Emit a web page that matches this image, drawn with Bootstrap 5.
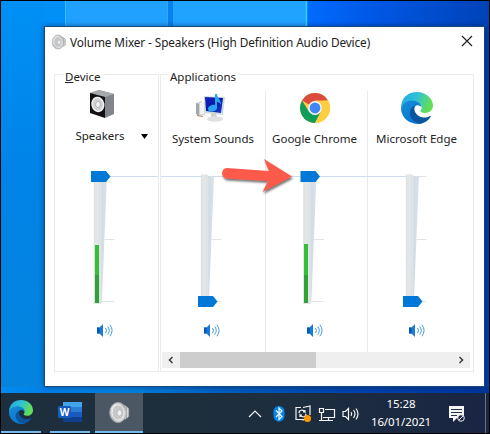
<!DOCTYPE html>
<html lang="en">
<head>
<meta charset="utf-8">
<meta name="viewport" content="width=device-width, initial-scale=1">
<title>Volume Mixer</title>
<link href="https://cdn.jsdelivr.net/npm/bootstrap@5.3.0/dist/css/bootstrap.min.css" rel="stylesheet">
<style>
body{font-family:"Noto Sans","Open Sans",sans-serif;font-size:11.5px;line-height:16px;color:#222;background:#000}
svg{display:block;flex:none}
.screen{width:490px;height:434px;border:1px solid #000}
.desktop{height:392px;background:linear-gradient(90deg,#008cf0 0,#0080e8 44px,#0080df 130px,#005cc0 230px,#0045ad 340px,#00369c 488px)}
.wallpaper{height:392px;width:488px}
.mixer{left:43px;top:25px;width:441px;height:361px;border:1px solid #174a78;box-shadow:0 0 5px rgba(0,20,60,.5)}
.titlebar{height:29px;padding:0 11px 0 6px}
.title-text{font-size:11.8px;letter-spacing:-.1px;white-space:nowrap;margin-left:3px}
.close-glyph{margin-top:-2px}
.panels{padding:18px 0 0 9px;gap:1px}
.panel{height:298px;border:1px solid #ebebeb}
.device{width:105px}.apps{width:314px}
.caption{height:16px;margin:-8px 0 0 8px;padding:0 2px;background:#fff;line-height:19px;width:max-content}
.apps .caption{margin-left:7px}
.app-icon{height:36px}
.device .app-icon{margin:-1px 0 0 -10px}
.device .channel-name{margin:9px 0 0 10px}
.channel-name{height:18px;white-space:nowrap}
.channel .channel-name{padding-top:5px}
.channel{width:104px;height:261px;margin-top:8px}
.channel + .channel{width:102px;border-left:1px solid #e8ebf0}
.channel .app-icon{margin-top:-1px}
.faders{margin-top:-205px}
.device-fader{margin-top:2px}
.scroller{height:16px;background:#efefef;width:308px;margin-left:1px}
.scroller svg{width:18px;height:16px}
.scroll-thumb{width:136px;background:#cdcdcd;height:16px}
.pointer-arrow{left:173px;top:128px;z-index:3}
.taskbar{height:40px;background:linear-gradient(90deg,#1d2e3c,#1d2e3e 60%,#192543);color:#fff}
.task{height:40px;border-bottom:2px solid #76b9ed}
.task-a{width:40px;margin-right:9px}.task-b{width:40px;margin-right:5px}.task-c{width:48px;background:#4b5864}
.tray{margin-left:104px}
.clock{width:62px;line-height:18px;letter-spacing:-.1px;margin-left:5px;white-space:nowrap}
.notes{margin-left:15px}
.show-desktop{width:4px}
</style>
<script src="https://cdn.jsdelivr.net/npm/bootstrap@5.3.0/dist/js/bootstrap.bundle.min.js"></script>
</head>
<body class="m-0 overflow-hidden">
<svg width="0" height="0" class="position-absolute" aria-hidden="true">
<defs>
<linearGradient id="eTop" x1="0" y1="0" x2="1" y2=".3"><stop offset="0" stop-color="#22a5e4"/><stop offset=".5" stop-color="#2fc1d8"/><stop offset="1" stop-color="#61df58"/></linearGradient>
<linearGradient id="eSide" x1="0" y1="0" x2=".6" y2="1"><stop offset="0" stop-color="#168ed8"/><stop offset="1" stop-color="#0874d0"/></linearGradient>
<linearGradient id="metal" x1="0" y1="0" x2="1" y2="1"><stop offset="0" stop-color="#f4f4f4"/><stop offset=".5" stop-color="#b8babb"/><stop offset="1" stop-color="#e6e7e8"/></linearGradient>
<linearGradient id="blueScreen" x1="0" y1="0" x2="1" y2="1"><stop offset="0" stop-color="#1720c8"/><stop offset=".5" stop-color="#081a9c"/><stop offset="1" stop-color="#173ed8"/></linearGradient>
<linearGradient id="wedge"><stop offset="0" stop-color="#d0dae4"/><stop offset="1" stop-color="#dae2ea"/></linearGradient>
<symbol id="edge" viewBox="0 0 32 32">
<path fill="url(#eTop)" d="M0 16C0 6 7 0 16 0s16 6.500 16 13.500c0 4.500-3.500 7.500-8 7.500-3 0-4.800-1-4.400-2.200.2-.7 1.100-1.400 1.100-3.200 0-3.400-3.400-6.600-8.900-6.600C6.500 9 2 11.500 0 16z"/>
<path fill="url(#eSide)" d="M0 16C1.500 11.600 5.500 8.500 11 8.500c5.600 0 9.500 3 9.500 6.800-1-1.600-2.700-2.300-4.500-2.100-3 .4-5 3.300-4.500 7 .6 5.500 5 9.700 10 11-2.500 1-7.500 1.200-11.500-.6C3.500 28 0 22 0 16z"/>
<path fill="#09559e" d="M15 13.300c-3.600 1.200-6.300 4.400-6.100 8.200.3 5.200 4.600 9.500 10.600 10 4.500-.3 8.200-3.400 10-6.400.6-1.100-.1-1.400-1-.9-2 1.100-4.700 1.700-7.500 1-4.700-1.100-8-5.100-7.600-8.800.1-1.200.6-2.200 1.600-3.100z"/>
</symbol>
<symbol id="sound" viewBox="0 0 16 13"><path fill="#1b79d9" d="M0 3.500h2.500L6 0v13L2.500 9.500H0z"/><path fill="#0757b4" d="M0 3.500h2.500v6H0z"/><path fill="none" stroke="#3f98dd" d="M8.500 4q2 2.500 0 5M10.700 2.500q3.100 4 0 8M12.900.8q4.400 5.700 0 11.400"/></symbol>
<symbol id="cone" viewBox="0 0 24 24"><path fill="#a4a8aa" d="M12 2l6 3 2 1 2 2v8l-2 2-3 1-5 3z"/><path d="M18 5v14M20.500 7v10" stroke="#e2e3e4" fill="none"/><ellipse cx="10.500" cy="12" rx="8.700" ry="10.500" fill="url(#metal)" stroke="#a2a4a6"/><ellipse cx="10.500" cy="12" rx="6.300" ry="8" fill="#c5c7c8" stroke="#f1f1f1"/><ellipse cx="12" cy="12.500" rx="2.400" ry="3.200" fill="#efefef" stroke="#adafb1" stroke-width=".6"/></symbol>
<symbol id="track" viewBox="0 0 36 140"><path fill="url(#wedge)" d="M9 10h7L10.800 137H9z"/><path fill="#e2e7ea" d="M8.500 9H10.200v129H8.500z"/><path fill="#e3e6e7" d="M3 8.500h6V138H3z"/><path stroke="#d8dcdf" stroke-width=".6" d="M3.300 8.500V138M8.700 8.500V138"/><path stroke="#e1e4e7" d="M13.500 73.500h10M11 135.500h12"/></symbol>
<path id="thumb" fill="#0078d7" d="M0 0h15l4.500 5.500L15 11H0z"/>
</defs>
</svg>

<main class="screen position-relative overflow-hidden">
<div class="desktop">
<svg class="wallpaper" viewBox="1 1 488 392" preserveAspectRatio="none">
<defs><linearGradient id="left" x1="0" y1="0" x2="0" y2="1"><stop offset="0" stop-color="#0090f5"/><stop offset=".45" stop-color="#0083e7"/><stop offset="1" stop-color="#0584de"/></linearGradient><linearGradient id="right"><stop offset="0" stop-color="#006cff"/><stop offset=".35" stop-color="#0058e6"/><stop offset="1" stop-color="#0043b7"/></linearGradient></defs>
<path fill="url(#left)" d="M1 1h44v386H1z"/><path fill="#0090f8" d="M44 1h21v26H44z"/><path fill="#20a1ff" d="M65 1h102v26H65z"/><path fill="#0a80ec" d="M167 1h6v26h-6z"/><path fill="#20a2ff" d="M173 1h133v26H173z"/><path fill="url(#right)" d="M307 1h182v26H307z"/><path fill="#003fae" d="M484 27h5v360h-5z"/>
<path d="M65.500 1v25" stroke="#36bcff"/><path d="M306.500 1v25" stroke="#37d5ff" stroke-width="1.500"/><path d="M167.500 1v25" stroke="#2fa9fc"/>
</svg>
</div>

<section class="mixer bg-white position-absolute">
<header class="titlebar d-flex align-items-center">
<svg width="16" height="16"><use href="#cone"/></svg>
<span class="title-text">Volume Mixer - Speakers (High Definition Audio Device)</span>
<svg class="close-glyph ms-auto" width="12" height="12" viewBox="0 0 12 12"><path d="M1 1l10 10M11 1L1 11" stroke="#222" stroke-width="1.200"/></svg>
</header>
<div class="panels d-flex">
<div class="panel device">
<div class="caption"><u>D</u>evice</div>
<div class="d-flex flex-column align-items-center">
<div class="app-icon d-flex align-items-center pt-2">
<svg width="24" height="28" viewBox="0 0 24 28"><path fill="#82868b" d="M0 3l9-3 15 4v20l-9 4z"/><path fill="#a6a9ac" d="M0 3l9-3 15 4-9 3z"/><path fill="#141012" d="M0 3l15 4v21L0 23z"/><ellipse cx="7.800" cy="14.500" rx="5.800" ry="7" fill="#cfd2d4" stroke="#f2f2f2" stroke-width="1.500" transform="rotate(-12 7.500 14)"/><ellipse cx="8" cy="14.500" rx="2.300" ry="3.100" fill="#f4f4f4" stroke="#aaa" stroke-width=".8"/></svg>
</div>
<div class="channel-name d-flex align-items-center">Speakers<svg class="ms-3" width="7" height="5" viewBox="0 0 7 5"><path d="M0 0h7L3.500 5z"/></svg></div>
</div>
<svg class="device-fader" width="103" height="195" viewBox="55 147 103 195"><path d="M109 176.500h50" stroke="#cfdeec"/><use href="#track" x="91" y="166" width="36" height="140"/><path fill="#36bf36" d="M95 245h4v58h-4z"/><path fill="#31a236" d="M95 275h4v28h-4z"/><use href="#thumb" x="91" y="171"/><use href="#sound" x="97" y="324" width="16" height="13"/></svg>
</div>
<div class="panel apps">
<div class="caption">Applications</div>
<div class="d-flex">
<div class="channel">
<div class="app-icon d-flex justify-content-center align-items-center"><svg class="me-1" width="32" height="28" viewBox="0 0 32 28"><path fill="#d0d3d4" d="M1 9l6-2 3 14-8 1z"/><path fill="#a1a7aa" d="M1 9l3 1v12l-3-2z"/><path fill="#f1f2f3" d="M5 9l4-1v12H5z"/><path fill="#d3dade" d="M9 2l21 1-2 18-19-2z"/><path fill="url(#blueScreen)" d="M10 3l18 1-2 15-15-2z"/><path fill="#cfd1d2" d="M16 19h5l1 4h-6z"/><ellipse cx="20" cy="25" rx="8" ry="2.700" fill="#dedfdf"/><path fill="#b58a69" d="M2 21l6 1v1l-6-1z"/><path fill="#27a5f4" d="M20 0l2 0c0 4 4 5 4 11-1-2-2-3-4-3v6c0 4-9 5-9 1 0-3 5-5 7-4z"/></svg></div>
<div class="channel-name text-center">System Sounds</div>
</div>
<div class="channel">
<div class="app-icon d-flex justify-content-center align-items-center"><svg class="me-1" width="30" height="30" viewBox="0 0 30 30"><circle cx="15" cy="15" r="15" fill="#ffcd40"/><path fill="#db4c3f" d="M15 15L2.010 7.500A15 15 0 0 1 28 7.500H15z"/><path fill="#0f9d58" d="M15 30A15 15 0 0 1 2.010 7.500L8.900 18.500 15 22 21 18.500z"/><path fill="#ffcd40" d="M28 7.500A15 15 0 0 1 15 30l6-11.500V8z"/><circle cx="15" cy="15" r="6.900" fill="#f5f5f5"/><circle cx="15" cy="15" r="5.400" fill="#4285f4"/></svg></div>
<div class="channel-name text-center pe-1">Google Chrome</div>
</div>
<div class="channel">
<div class="app-icon d-flex justify-content-center align-items-center"><svg class="me-1" width="32" height="32"><use href="#edge"/></svg></div>
<div class="channel-name text-center pe-1">Microsoft Edge</div>
</div>
</div>
<svg class="faders position-relative" width="312" height="205" viewBox="161 147 312 205">
<path d="M161 176.500h260" stroke="#cfdeec"/><path d="M421 176.500h5" stroke="#e1e4e7"/>
<use href="#track" x="198" y="166" width="36" height="140"/><use href="#thumb" x="198" y="296"/><use href="#sound" x="204" y="324" width="16" height="13"/>
<use href="#track" x="300.500" y="166" width="36" height="140"/><path fill="#36bf36" d="M304 244h4v59h-4z"/><path fill="#31a236" d="M304 275h4v28h-4z"/><use href="#thumb" x="300.500" y="171"/><use href="#sound" x="307" y="324" width="16" height="13"/>
<use href="#track" x="403" y="166" width="36" height="140"/><use href="#thumb" x="403" y="296"/><use href="#sound" x="409" y="324" width="16" height="13"/>
</svg>
<div class="scroller d-flex"><svg viewBox="0 0 18 16"><path d="M10.500 5L7.500 8l3 3" fill="none" stroke="#444" stroke-width="1.600"/></svg><div class="scroll-thumb"></div><svg class="ms-auto" viewBox="0 0 18 16"><path d="M7.500 5l3 3-3 3" fill="none" stroke="#444" stroke-width="1.600"/></svg></div>
</div>
</div>
<svg class="pointer-arrow position-absolute" width="80" height="44" viewBox="218 155 80 44"><defs><filter id="arrowShadow"><feDropShadow dx="1" dy="2" stdDeviation="1" flood-color="#222" flood-opacity=".65"/></filter></defs><path filter="url(#arrowShadow)" fill="#fd5a4c" d="M227 168l42 3-5-12 28 17.500-29.500 15.500 5.500-11-41-2.500c-6.500-.5-6.500-10.500 0-10.500z"/></svg>
</section>

<footer class="taskbar d-flex align-items-center">
<div class="task task-a d-flex align-items-center justify-content-center"><svg width="24" height="24"><use href="#edge"/></svg></div>
<div class="task task-b d-flex align-items-center justify-content-center"><svg width="24" height="22" viewBox="0 0 24 22"><path fill="#41a5ee" d="M5 1h19v5H5z"/><path fill="#2b7cd3" d="M5 6h19v5H5z"/><path fill="#185abd" d="M5 11h19v5H5z"/><path fill="#103f91" d="M5 16h19v5H5z"/><rect y="5" width="13" height="12" rx="1" fill="#185abd"/><text x="6.500" y="14.500" text-anchor="middle" font-family="Noto Sans" font-size="10" font-weight="700" fill="#fff">W</text></svg></div>
<div class="task task-c d-flex align-items-center justify-content-center"><svg width="23" height="23"><use href="#cone"/></svg></div>
<svg class="tray" width="118" height="24" viewBox="247 400 118 24" fill="none" stroke="#f4f4f4" stroke-width="1.200">
<path d="M249 416l6-6 6 6"/>
<rect x="273.500" y="405" width="11" height="15.500" rx="5.500" fill="#0086f0" stroke="none"/><path d="M276 409.500l6 6-3 3v-11.500l3 3-6 6"/>
<path d="M301 406.500h-5v12h9M303 406.500l7-1.500v9M301 418.500l3 .5M299 412c0-3 4-4 6-1v-2m0 2h-2M306 413c0 3-4 4-6 1v2m0-2h2"/><circle cx="307.500" cy="417.500" r="3.500" fill="#ff9700" stroke="none"/>
<path d="M325 408.500h9.500v8H323M319.500 407.500h4v4h-4zM321.500 411.500v8M319 419.500h14M328.500 416.500v3"/>
<path d="M343 410.500h2.500l3-3v11l-3-3H343zM351 411q1.500 2 0 4M353.500 409q3 4 0 8M356 407.500q4 5.500 0 11"/>
</svg>
<div class="clock text-center"><div>15:28</div><div>16/01/2021</div></div>
<svg class="notes" width="20" height="20" viewBox="447 402 20 20"><path fill="#f5f5f5" d="M449 405h15v12h-7l-4 4v-4h-4z"/><path d="M451 408.500h11M451 411.500h11M451 414.500h6" stroke="#243345"/><circle cx="461" cy="417" r="3.300" fill="#1b2940" stroke="#eee"/><path d="M459 419l4-4" stroke="#eee"/></svg>
<div class="show-desktop ms-auto border-start border-secondary h-100"></div>
</footer>
</main>
</body>
</html>
